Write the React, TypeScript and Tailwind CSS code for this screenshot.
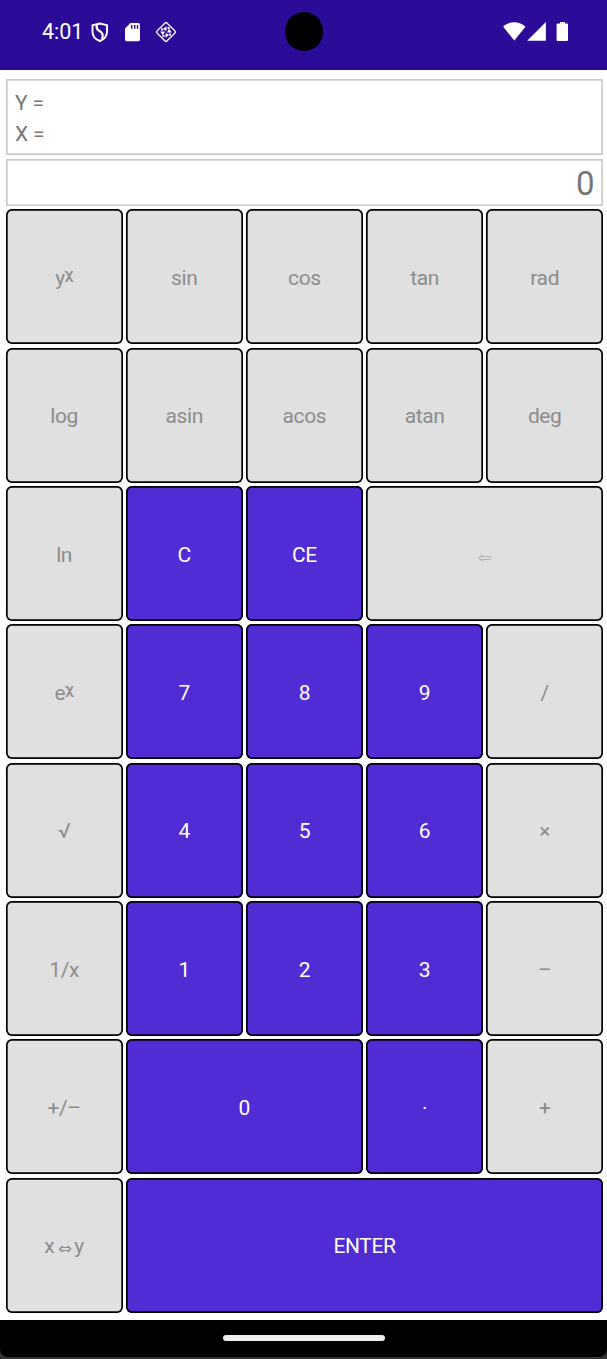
type Key = { label: string; tone?: "dark"; span?: string; kind?: "power" | "back" | "swap" };

const keys: Key[] = [
  { label: "y", kind: "power" }, { label: "sin" }, { label: "cos" }, { label: "tan" }, { label: "rad" },
  { label: "log" }, { label: "asin" }, { label: "acos" }, { label: "atan" }, { label: "deg" },
  { label: "ln" }, { label: "C", tone: "dark" }, { label: "CE", tone: "dark" }, { label: "⇦", kind: "back", span: "col-span-2" },
  { label: "e", kind: "power" }, { label: "7", tone: "dark" }, { label: "8", tone: "dark" }, { label: "9", tone: "dark" }, { label: "/" },
  { label: "√" }, { label: "4", tone: "dark" }, { label: "5", tone: "dark" }, { label: "6", tone: "dark" }, { label: "×" },
  { label: "1/x" }, { label: "1", tone: "dark" }, { label: "2", tone: "dark" }, { label: "3", tone: "dark" }, { label: "–" },
  { label: "+/–" }, { label: "0", tone: "dark", span: "col-span-2" }, { label: "·", tone: "dark" }, { label: "+" },
  { label: "x⇔y", kind: "swap" }, { label: "ENTER", tone: "dark", span: "col-span-4" },
];

function KeyLabel({ item }: { item: Key }) {
  if (item.kind === "power")
    return (
      <span className="flex">
        {item.label}
        <span className="-mt-[2.500px] -ml-[0.500px] inline-block scale-y-90 text-[17px] font-medium">χ</span>
      </span>
    );
  if (item.kind === "back") return <span className="pt-[4px] font-['DejaVu_Sans'] text-[16px] font-extralight text-[#aaaaaa]">{item.label}</span>;
  if (item.kind === "swap")
    return (
      <span className="flex items-center">
        x<span className="ml-[4px] mr-[3px] pt-[4px] font-['DejaVu_Sans'] text-[16px]">⇔</span>y
      </span>
    );
  return <span>{item.label}</span>;
}

function StatusBar() {
  return (
    <header className="relative flex h-[70px] shrink-0 bg-[#2c0b98] text-white">
      <span className="ml-[42px] mt-[16px] h-8 w-[41px] whitespace-nowrap text-[21.5px] leading-8">4:01</span>
      <svg className="ml-[7px] mt-[21px] h-[22px] w-[20px]" viewBox="0 0 20 22" fill="none" stroke="white" strokeWidth="1.9">
        <path d="M9.800 2.500 17 4.200v6.500c0 4.500-3 7.600-7.200 9.300C5.500 18.300 2.500 15.200 2.500 10.700V4.200Z" />
        <path d="M7.300 3.300c-1.700 3.400-.6 5.200 2.200 6.800 2.900 1.700 4.300 3.500 2.600 8" strokeWidth="2.300" />
      </svg>
      <svg className="ml-[14px] mt-[22px] h-5 w-[17px]" viewBox="0 0 17 20">
        <path fill="white" d="M6.500 1H14a2 2 0 0 1 2 2v14.500a1.700 1.700 0 0 1-1.700 1.700H2.700A1.700 1.700 0 0 1 1 17.500V6.500Z" />
        <path stroke="#2c0b98" strokeWidth="1.400" d="M7.700 3v3.700M10.700 3v3.700M13.500 3v3.700" />
      </svg>
      <svg className="ml-[13.500px] mt-[21px] h-[22px] w-[22px]" viewBox="0 0 22 22" fill="none" stroke="white">
        <rect x="4" y="4" width="14" height="14" rx="1.300" strokeWidth="1.300" transform="rotate(45 11 11)" />
        <path fill="white" stroke="none" d="M11.500 5.200v4.800L7.800 7.900ZM16.800 11.500H12L14.100 7.800ZM10.500 16.800V12l3.700 2.100ZM5.200 10.500H10L7.900 14.200Z" />
        <path fill="white" stroke="none" d="M12.500 6h2v2h-2zM14 12.500h2v2h-2zM7.500 14h2v2h-2zM6 7.500h2v2H6z" />
      </svg>
      <span className="absolute left-[285px] top-[12px] h-[39px] w-[38px] rounded-full bg-black" />
      <svg className="ml-auto mr-[37px] mt-[21px] h-[21px] w-[68px]" viewBox="0 0 68 21" fill="white">
        <path d="M1.200 5.800C7.500-.3 17.500-.3 23.500 5.800L12.300 19.500Z" />
        <path d="M25.200 19.800 43.900 1v18.800Z" />
        <path d="M58 1h5v1.500h2a1 1 0 0 1 1 1v15.200a1.200 1.200 0 0 1-1.200 1.200h-8.600A1.200 1.200 0 0 1 54.600 18.700V3.500a1 1 0 0 1 1-1H58Z" />
      </svg>
    </header>
  );
}

export default function App() {
  return (
    <div className="flex h-[1359px] w-[607px] flex-col bg-white font-[Roboto,sans-serif] text-[21px]">
      <StatusBar />
      <main className="flex min-h-0 flex-1 flex-col pt-[9px] text-[#767676]">
        <section className="mr-[4px] ml-[6px] h-[76px] pt-[9px] pl-[9px] leading-[31px] tracking-[-0.2px] shadow-[inset_0_0_0_1.7px_#cccccc]">
          <div>Y =</div>
          <div>X =</div>
        </section>
        <section className="mr-[4px] ml-[6px] mt-[4px] flex h-[47px] items-center justify-end pr-[8.500px] text-[33px] leading-none shadow-[inset_0_0_0_1.7px_#cccccc]">
          <span className="pt-[2px]">0</span>
        </section>
        <section className="mr-[3.800px] ml-[5.600px] mt-[3.300px] grid h-[1103.500px] shrink-0 grid-cols-5 grid-rows-8 gap-[3.200px]">
          {keys.map((item, i) => (
            <button
              key={i}
              className={`flex items-center justify-center rounded-[6px] pt-[4px] tracking-[-0.400px] shadow-[inset_0_0_0_1.7px_#000] ${item.span ?? ""} ${
                item.tone ? "bg-[#512bd4] text-white" : "bg-[#e0e0e0] text-[#8c8c8c]"
              }`}
            >
              <KeyLabel item={item} />
            </button>
          ))}
        </section>
      </main>
      <footer className="h-[39px] shrink-0 bg-[#343234]">
        <div className="flex h-[37px] justify-center rounded-b-[8px] bg-black pt-[15px]">
          <span className="h-[6px] w-[162px] rounded-full bg-[#eeeeee]" />
        </div>
      </footer>
    </div>
  );
}
